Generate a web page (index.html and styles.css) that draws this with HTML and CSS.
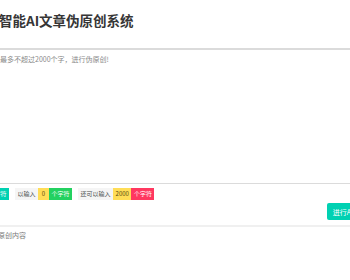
FILE: index.html
```html
<!DOCTYPE html>
<html>

<head>
  <title>智能AI文章伪原创系统</title>
  <link rel="stylesheet" href="styles.css">
</head>

<body>
  <div class="page">
    <h1 class="title">智能AI文章伪原创系统</h1>

    <div class="textarea">
      <p class="placeholder">请输入原文，最多不超过2000个字，进行伪原创!</p>
    </div>

    <div class="tags-row">
      <div class="tags">
        <span class="tag is-primary">个字符</span>
      </div>
      <div class="tags">
        <span class="tag is-light">以输入</span>
        <span class="tag is-warning num">0</span>
        <span class="tag is-success">个字符</span>
      </div>
      <div class="tags">
        <span class="tag is-light">还可以输入</span>
        <span class="tag is-warning">2000</span>
        <span class="tag is-danger">个字符</span>
      </div>
    </div>

    <div class="button-row">
      <button class="button">进行AI伪原创</button>
    </div>

    <hr class="divider">

    <p class="result">伪原创内容</p>
  </div>
</body>

</html>
```

FILE: styles.css
```css
body {
  margin: 0;
  overflow: hidden;
  background-color: white;
  font-family: "Noto Sans CJK SC", "Noto Sans", sans-serif;
}

.page {
  width: 350px;
}

.title {
  margin: 10px 0 0 -1px;
  font-size: 13.5px;
  line-height: 20px;
  font-weight: bold;
  color: #363636;
}

.textarea {
  margin: 18px -10px 0 -10px;
  height: 133px;
  border-top: 2px solid #dbdbdb;
  border-bottom: 1px solid #dbdbdb;
}

.placeholder {
  margin: 4px 0 0 0;
  text-indent: -42px;
  font-size: 7px;
  line-height: 10px;
  color: #8a8a8a;
}

.placeholder,
.result {
  padding-left: 10px;
}

.tags-row {
  display: flex;
  gap: 6px;
  margin: 4px 0 0 -14px;
}

.tags {
  display: flex;
}

.tag {
  height: 12px;
  line-height: 12px;
  padding: 0 2.5px;
  font-size: 6px;
  white-space: nowrap;
}

.num {
  min-width: 11px;
  box-sizing: border-box;
  text-align: center;
}

.is-primary {
  background-color: #00d1b2;
  color: white;
}

.is-light {
  background-color: #f5f5f5;
  color: #4a4a4a;
}

.is-warning {
  background-color: #ffdd57;
  color: #5a4a10;
}

.is-success {
  background-color: #23d160;
  color: white;
}

.is-danger {
  background-color: #ff3860;
  color: white;
}

.button-row {
  display: flex;
  justify-content: flex-end;
  margin: 3px -30px 0 0;
}

.button {
  height: 17px;
  padding: 0 6px;
  border: none;
  border-radius: 2px;
  background-color: #00d1b2;
  color: white;
  font-family: inherit;
  font-size: 7px;
}

.divider {
  margin: 5px 0 0 0;
  height: 2px;
  border: none;
  background-color: #f0f0f0;
}

.result {
  margin: 3px 0 0 -19px;
  font-size: 7px;
  line-height: 10px;
  color: #7a7a7a;
}
```
